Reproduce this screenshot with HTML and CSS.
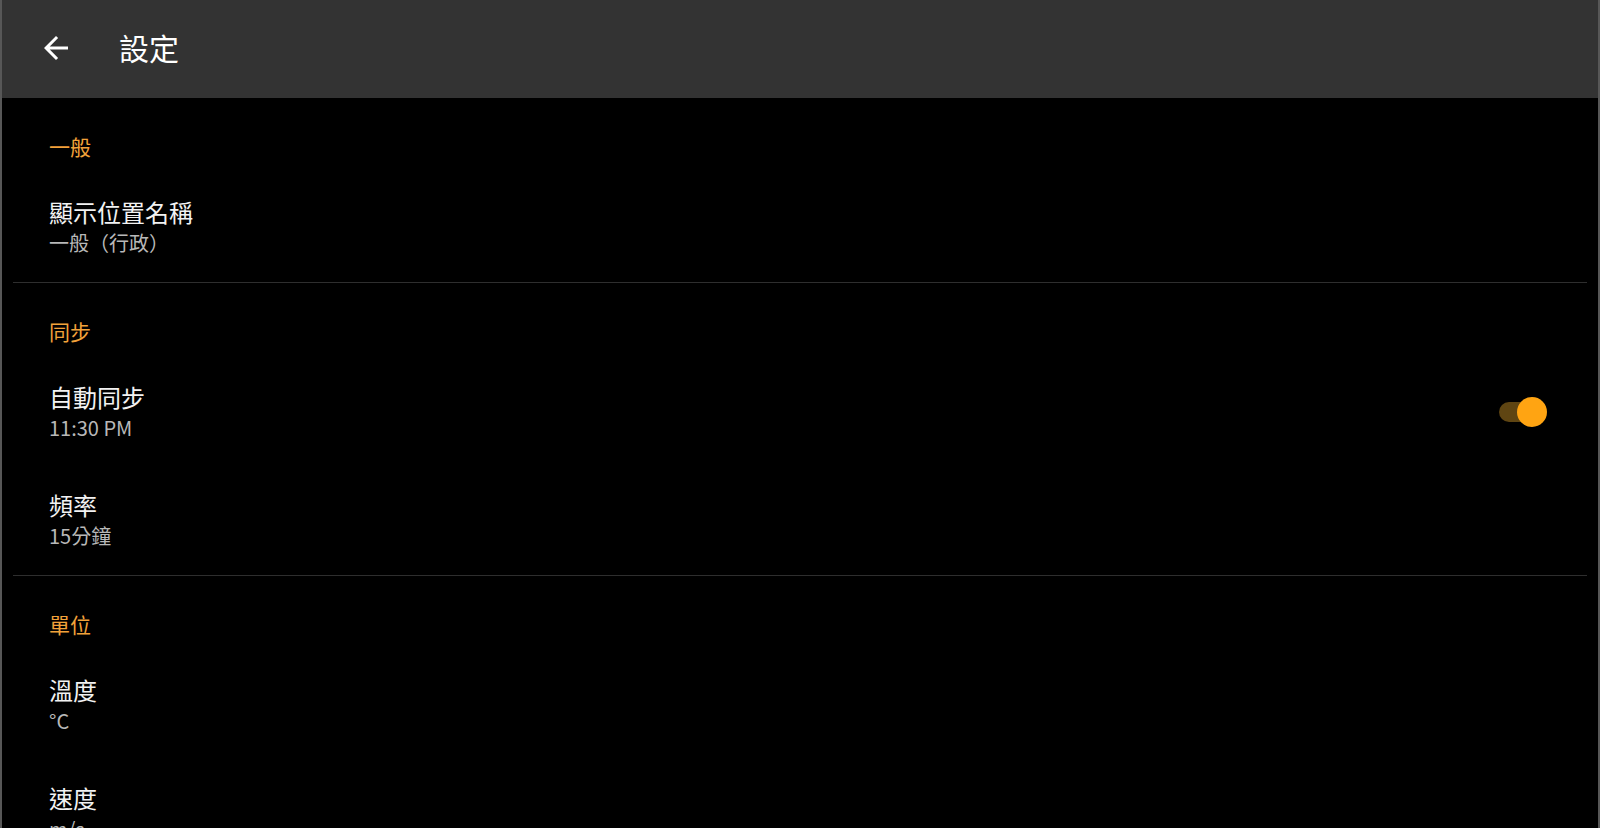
FILE: index.html
```html
<!DOCTYPE html>
<html lang="zh-Hant">
<head>
<meta charset="utf-8">
<title>設定</title>
<link rel="stylesheet" href="styles.css">
</head>
<body>
<div class="window">
  <header class="toolbar">
    <button class="nav-back" aria-label="返回">
      <svg viewBox="0 0 24 24" width="36" height="36"><path d="M20 11H7.83l5.59-5.59L12 4l-8 8 8 8 1.41-1.41L7.83 13H20v-2z" fill="#ffffff"/></svg>
    </button>
    <h1 class="toolbar-title">設定</h1>
  </header>

  <main class="prefs">
    <section class="pref-section">
      <h2 class="pref-category">一般</h2>
      <div class="pref-item">
        <div class="pref-text">
          <div class="pref-title">顯示位置名稱</div>
          <div class="pref-summary">一般（行政）</div>
        </div>
      </div>
    </section>
    <hr class="divider">
    <section class="pref-section">
      <h2 class="pref-category">同步</h2>
      <div class="pref-item">
        <div class="pref-text">
          <div class="pref-title">自動同步</div>
          <div class="pref-summary">11:30 PM</div>
        </div>
        <div class="switch on">
          <span class="switch-track"></span>
          <span class="switch-thumb"></span>
        </div>
      </div>
      <div class="pref-item">
        <div class="pref-text">
          <div class="pref-title">頻率</div>
          <div class="pref-summary">15分鐘</div>
        </div>
      </div>
    </section>
    <hr class="divider">
    <section class="pref-section">
      <h2 class="pref-category">單位</h2>
      <div class="pref-item">
        <div class="pref-text">
          <div class="pref-title">溫度</div>
          <div class="pref-summary">°C</div>
        </div>
      </div>
      <div class="pref-item">
        <div class="pref-text">
          <div class="pref-title">速度</div>
          <div class="pref-summary">m/s</div>
        </div>
      </div>
    </section>
  </main>
</div>
</body>
</html>
```

FILE: styles.css
```css
html, body {
  margin: 0;
  padding: 0;
  background: #000;
  height: 100%;
  overflow: hidden;
}

body {
  font-family: "Noto Sans CJK TC", "Noto Sans", Roboto, sans-serif;
  color: #f0f0f0;
}

.window {
  height: 100%;
  border-left: 2px solid #575757;
  border-right: 2px solid #575757;
  background: #000;
}

/* top app bar */
.toolbar {
  height: 98px;
  background: #333333;
  display: flex;
  align-items: center;
  padding-left: 36px;
  box-sizing: border-box;
}

.nav-back {
  width: 36px;
  height: 36px;
  padding: 0;
  margin: 0;
  border: 0;
  background: none;
  display: flex;
  margin-top: -2px;
}

.toolbar-title {
  margin: 0 0 0 45px;
  font-size: 30px;
  font-weight: 400;
  line-height: 40px;
  color: #ffffff;
  margin-top: -4px;
}

/* preference list */
.prefs {
  display: flex;
  flex-direction: column;
}

.pref-category {
  margin: 0;
  padding: 33px 0 13px 47px;
  font-size: 21px;
  font-weight: 400;
  line-height: 30px;
  color: #f2a23a;
}

.pref-item {
  display: flex;
  align-items: center;
  padding: 22px 51px 24px 47px;
}

.pref-text {
  flex: 1;
}

.pref-title {
  font-size: 24px;
  line-height: 32px;
  color: #f2f2f2;
}

.pref-summary {
  font-size: 20px;
  line-height: 30px;
  color: #b8b8b8;
}

.divider {
  margin: 0 11px;
  border: 0;
  height: 1px;
  background: #2e2e2e;
}

/* switch */
.switch {
  position: relative;
  width: 48px;
  height: 30px;
}

.switch-track {
  position: absolute;
  left: 0;
  top: 5px;
  width: 44px;
  height: 20px;
  border-radius: 10px;
  background: #5f4512;
}

.switch-thumb {
  position: absolute;
  right: 0;
  top: 0;
  width: 30px;
  height: 30px;
  border-radius: 50%;
  background: #ffa412;
}
```
